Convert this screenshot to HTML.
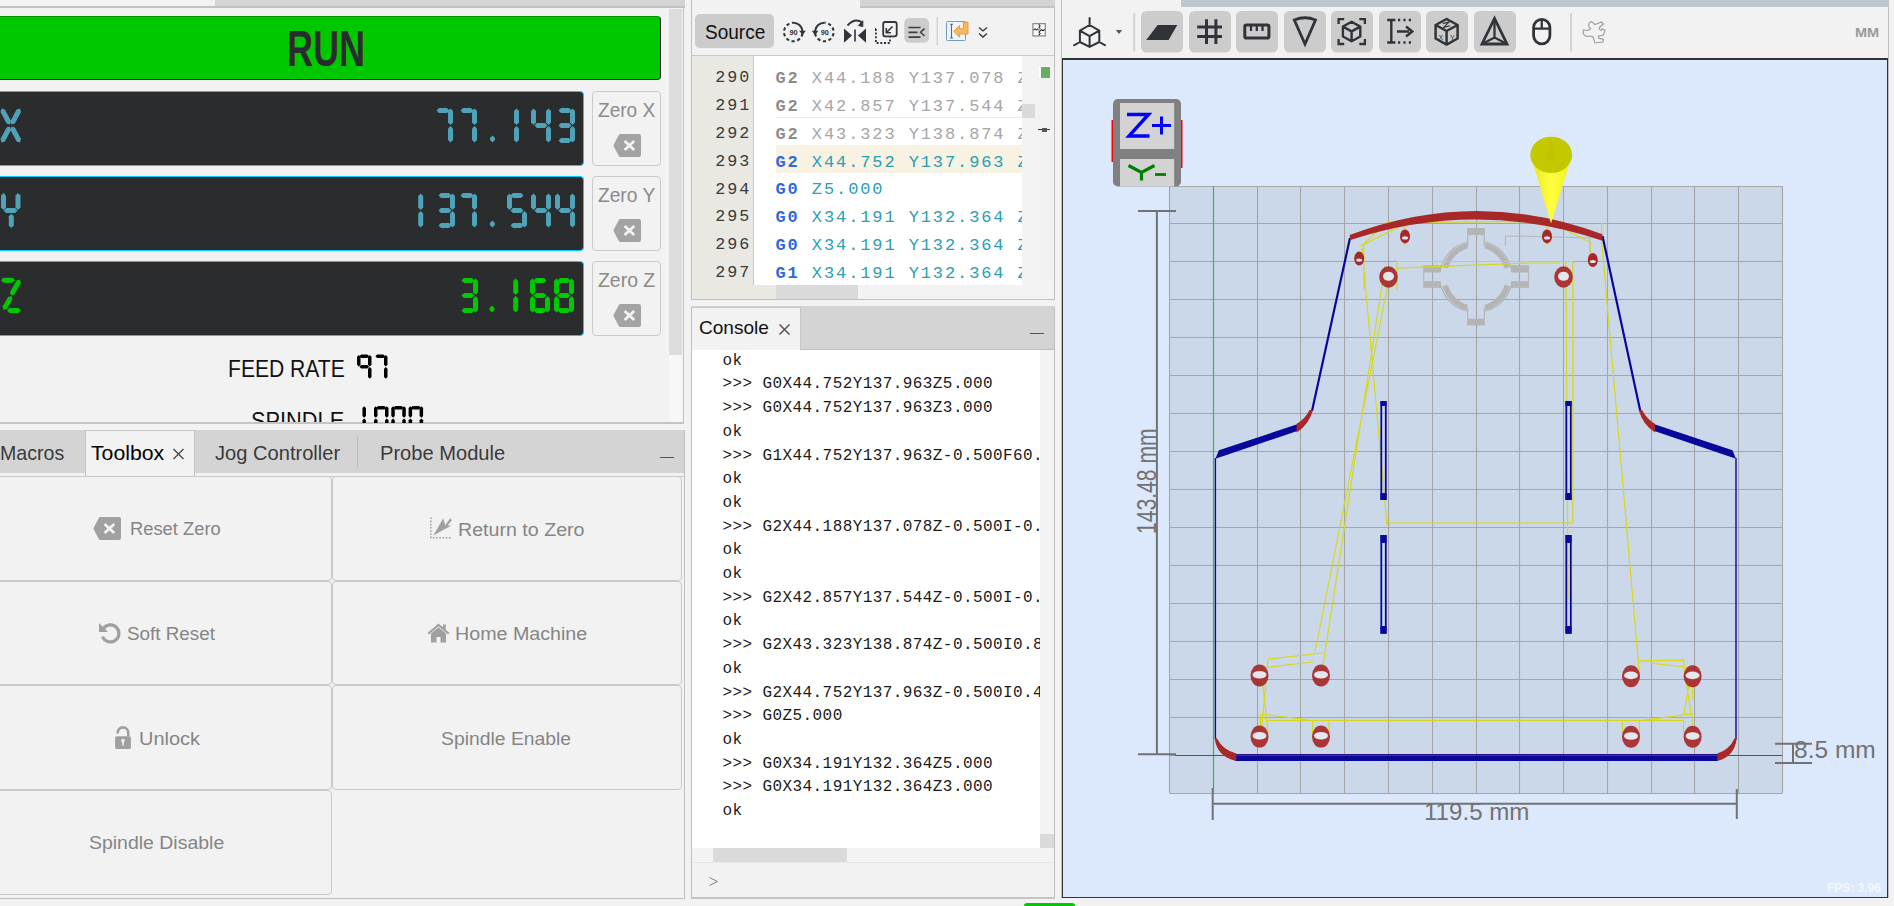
<!DOCTYPE html>
<html><head><meta charset="utf-8">
<style>
*{box-sizing:border-box;margin:0;padding:0}
html,body{width:1894px;height:906px;overflow:hidden;background:#f2f2f2;font-family:"Liberation Sans",sans-serif;position:relative}
.a{position:absolute}
.t{position:absolute;white-space:nowrap;line-height:1}
.dro{position:absolute;left:-6px;width:590px;height:75px;background:#2b2c2e;border:1px solid #00cdf9;border-radius:4px}
.zb{position:absolute;left:592px;width:69px;height:75px;border:1px solid #cbcbcb;border-radius:4px;background:#f2f2f2}
.zb .lbl{position:absolute;left:6px;top:11px;font-size:19px;color:#8a8a8a;white-space:nowrap;line-height:1}
.btn{position:absolute;border:1px solid #c9c9c9;border-radius:4px;background:#f2f2f2}
.bl{position:absolute;white-space:nowrap;font-size:18.6px;color:#878787;line-height:1}
.mono{font-family:"Liberation Mono",monospace}
</style></head><body>

<!-- ============ LEFT TOP PANEL (DRO) ============ -->
<div class="a" style="left:0;top:0;width:215px;height:7px;background:#f2f2f2"></div>
<div class="a" style="left:215px;top:0;width:470px;height:7px;background:#d4d4d4"></div>
<div class="a" style="left:0;top:6px;width:685px;height:2px;background:#c2c2c2"></div>
<div class="a" style="left:683px;top:7px;width:1px;height:417px;background:#c0c0c0"></div>
<div class="a" style="left:0;top:422px;width:684px;height:2px;background:#c4c4c4"></div>
<!-- scrollbar -->
<div class="a" style="left:669px;top:9px;width:13px;height:346px;background:#dcdcdc"></div>
<div class="a" style="left:669px;top:355px;width:13px;height:67px;background:#f7f7f7"></div>

<!-- RUN -->
<div class="a" style="left:-6px;top:16px;width:667px;height:64px;background:#00c800;border:1px solid #222226;border-top-color:#009600;border-radius:4px"></div>
<div class="t" style="left:287.40px;top:25.00px;font-family:'Liberation Sans';font-weight:bold;font-size:49.85px;color:#2a2b2e;transform:scaleX(0.7238);transform-origin:0 0;">RUN</div>

<div class="dro" style="top:91px"></div>
<div class="dro" style="top:176px"></div>
<div class="dro" style="top:261px"></div>

<svg class="a" style="left:0;top:0" width="684" height="423" viewBox="0 0 684 423"><polygon points="436.50,110.50 439.00,108.00 447.00,108.00 449.50,110.50 447.00,113.00 439.00,113.00" fill="#4fa2b7"/><polygon points="450.50,108.50 453.00,111.00 453.00,122.50 450.50,125.00 448.00,122.50 448.00,111.00" fill="#4fa2b7"/><polygon points="450.50,126.00 453.00,128.50 453.00,140.00 450.50,142.50 448.00,140.00 448.00,128.50" fill="#4fa2b7"/><polygon points="460.50,110.50 463.00,108.00 471.00,108.00 473.50,110.50 471.00,113.00 463.00,113.00" fill="#4fa2b7"/><polygon points="474.50,108.50 477.00,111.00 477.00,122.50 474.50,125.00 472.00,122.50 472.00,111.00" fill="#4fa2b7"/><polygon points="474.50,126.00 477.00,128.50 477.00,140.00 474.50,142.50 472.00,140.00 472.00,128.50" fill="#4fa2b7"/><polygon points="533.50,108.50 536.00,111.00 536.00,122.50 533.50,125.00 531.00,122.50 531.00,111.00" fill="#4fa2b7"/><polygon points="534.50,125.50 537.00,123.00 545.00,123.00 547.50,125.50 545.00,128.00 537.00,128.00" fill="#4fa2b7"/><polygon points="548.50,108.50 551.00,111.00 551.00,122.50 548.50,125.00 546.00,122.50 546.00,111.00" fill="#4fa2b7"/><polygon points="548.50,126.00 551.00,128.50 551.00,140.00 548.50,142.50 546.00,140.00 546.00,128.50" fill="#4fa2b7"/><polygon points="558.50,110.50 561.00,108.00 569.00,108.00 571.50,110.50 569.00,113.00 561.00,113.00" fill="#4fa2b7"/><polygon points="572.50,108.50 575.00,111.00 575.00,122.50 572.50,125.00 570.00,122.50 570.00,111.00" fill="#4fa2b7"/><polygon points="558.50,125.50 561.00,123.00 569.00,123.00 571.50,125.50 569.00,128.00 561.00,128.00" fill="#4fa2b7"/><polygon points="572.50,126.00 575.00,128.50 575.00,140.00 572.50,142.50 570.00,140.00 570.00,128.50" fill="#4fa2b7"/><polygon points="558.50,140.50 561.00,138.00 569.00,138.00 571.50,140.50 569.00,143.00 561.00,143.00" fill="#4fa2b7"/><polygon points="516.50,108.50 519.00,111.00 519.00,122.50 516.50,125.00 514.00,122.50 514.00,111.00" fill="#4fa2b7"/><polygon points="516.50,126.00 519.00,128.50 519.00,140.00 516.50,142.50 514.00,140.00 514.00,128.50" fill="#4fa2b7"/><polygon points="492.50,135.50 495.00,138.00 495.00,140.00 492.50,142.50 490.00,140.00 490.00,138.00" fill="#4fa2b7"/><polygon points="438.50,195.50 441.00,193.00 449.00,193.00 451.50,195.50 449.00,198.00 441.00,198.00" fill="#4fa2b7"/><polygon points="452.50,193.50 455.00,196.00 455.00,207.50 452.50,210.00 450.00,207.50 450.00,196.00" fill="#4fa2b7"/><polygon points="438.50,210.50 441.00,208.00 449.00,208.00 451.50,210.50 449.00,213.00 441.00,213.00" fill="#4fa2b7"/><polygon points="452.50,211.00 455.00,213.50 455.00,225.00 452.50,227.50 450.00,225.00 450.00,213.50" fill="#4fa2b7"/><polygon points="438.50,225.50 441.00,223.00 449.00,223.00 451.50,225.50 449.00,228.00 441.00,228.00" fill="#4fa2b7"/><polygon points="460.50,195.50 463.00,193.00 471.00,193.00 473.50,195.50 471.00,198.00 463.00,198.00" fill="#4fa2b7"/><polygon points="474.50,193.50 477.00,196.00 477.00,207.50 474.50,210.00 472.00,207.50 472.00,196.00" fill="#4fa2b7"/><polygon points="474.50,211.00 477.00,213.50 477.00,225.00 474.50,227.50 472.00,225.00 472.00,213.50" fill="#4fa2b7"/><polygon points="510.50,195.50 513.00,193.00 521.00,193.00 523.50,195.50 521.00,198.00 513.00,198.00" fill="#4fa2b7"/><polygon points="509.50,193.50 512.00,196.00 512.00,207.50 509.50,210.00 507.00,207.50 507.00,196.00" fill="#4fa2b7"/><polygon points="510.50,210.50 513.00,208.00 521.00,208.00 523.50,210.50 521.00,213.00 513.00,213.00" fill="#4fa2b7"/><polygon points="524.50,211.00 527.00,213.50 527.00,225.00 524.50,227.50 522.00,225.00 522.00,213.50" fill="#4fa2b7"/><polygon points="510.50,225.50 513.00,223.00 521.00,223.00 523.50,225.50 521.00,228.00 513.00,228.00" fill="#4fa2b7"/><polygon points="533.50,193.50 536.00,196.00 536.00,207.50 533.50,210.00 531.00,207.50 531.00,196.00" fill="#4fa2b7"/><polygon points="534.50,210.50 537.00,208.00 545.00,208.00 547.50,210.50 545.00,213.00 537.00,213.00" fill="#4fa2b7"/><polygon points="548.50,193.50 551.00,196.00 551.00,207.50 548.50,210.00 546.00,207.50 546.00,196.00" fill="#4fa2b7"/><polygon points="548.50,211.00 551.00,213.50 551.00,225.00 548.50,227.50 546.00,225.00 546.00,213.50" fill="#4fa2b7"/><polygon points="557.50,193.50 560.00,196.00 560.00,207.50 557.50,210.00 555.00,207.50 555.00,196.00" fill="#4fa2b7"/><polygon points="558.50,210.50 561.00,208.00 569.00,208.00 571.50,210.50 569.00,213.00 561.00,213.00" fill="#4fa2b7"/><polygon points="572.50,193.50 575.00,196.00 575.00,207.50 572.50,210.00 570.00,207.50 570.00,196.00" fill="#4fa2b7"/><polygon points="572.50,211.00 575.00,213.50 575.00,225.00 572.50,227.50 570.00,225.00 570.00,213.50" fill="#4fa2b7"/><polygon points="420.70,193.50 423.20,196.00 423.20,207.50 420.70,210.00 418.20,207.50 418.20,196.00" fill="#4fa2b7"/><polygon points="420.70,211.00 423.20,213.50 423.20,225.00 420.70,227.50 418.20,225.00 418.20,213.50" fill="#4fa2b7"/><polygon points="492.40,220.50 494.90,223.00 494.90,225.00 492.40,227.50 489.90,225.00 489.90,223.00" fill="#4fa2b7"/><polygon points="461.50,280.50 464.00,278.00 472.00,278.00 474.50,280.50 472.00,283.00 464.00,283.00" fill="#00c800"/><polygon points="475.50,278.50 478.00,281.00 478.00,292.50 475.50,295.00 473.00,292.50 473.00,281.00" fill="#00c800"/><polygon points="461.50,295.50 464.00,293.00 472.00,293.00 474.50,295.50 472.00,298.00 464.00,298.00" fill="#00c800"/><polygon points="475.50,296.00 478.00,298.50 478.00,310.00 475.50,312.50 473.00,310.00 473.00,298.50" fill="#00c800"/><polygon points="461.50,310.50 464.00,308.00 472.00,308.00 474.50,310.50 472.00,313.00 464.00,313.00" fill="#00c800"/><polygon points="533.50,280.50 536.00,278.00 544.00,278.00 546.50,280.50 544.00,283.00 536.00,283.00" fill="#00c800"/><polygon points="532.50,278.50 535.00,281.00 535.00,292.50 532.50,295.00 530.00,292.50 530.00,281.00" fill="#00c800"/><polygon points="533.50,295.50 536.00,293.00 544.00,293.00 546.50,295.50 544.00,298.00 536.00,298.00" fill="#00c800"/><polygon points="532.50,296.00 535.00,298.50 535.00,310.00 532.50,312.50 530.00,310.00 530.00,298.50" fill="#00c800"/><polygon points="533.50,310.50 536.00,308.00 544.00,308.00 546.50,310.50 544.00,313.00 536.00,313.00" fill="#00c800"/><polygon points="547.50,296.00 550.00,298.50 550.00,310.00 547.50,312.50 545.00,310.00 545.00,298.50" fill="#00c800"/><polygon points="557.50,280.50 560.00,278.00 568.00,278.00 570.50,280.50 568.00,283.00 560.00,283.00" fill="#00c800"/><polygon points="571.50,278.50 574.00,281.00 574.00,292.50 571.50,295.00 569.00,292.50 569.00,281.00" fill="#00c800"/><polygon points="571.50,296.00 574.00,298.50 574.00,310.00 571.50,312.50 569.00,310.00 569.00,298.50" fill="#00c800"/><polygon points="557.50,310.50 560.00,308.00 568.00,308.00 570.50,310.50 568.00,313.00 560.00,313.00" fill="#00c800"/><polygon points="556.50,296.00 559.00,298.50 559.00,310.00 556.50,312.50 554.00,310.00 554.00,298.50" fill="#00c800"/><polygon points="556.50,278.50 559.00,281.00 559.00,292.50 556.50,295.00 554.00,292.50 554.00,281.00" fill="#00c800"/><polygon points="557.50,295.50 560.00,293.00 568.00,293.00 570.50,295.50 568.00,298.00 560.00,298.00" fill="#00c800"/><polygon points="515.70,278.50 518.20,281.00 518.20,292.50 515.70,295.00 513.20,292.50 513.20,281.00" fill="#00c800"/><polygon points="515.70,296.00 518.20,298.50 518.20,310.00 515.70,312.50 513.20,310.00 513.20,298.50" fill="#00c800"/><polygon points="492.00,305.50 494.50,308.00 494.50,310.00 492.00,312.50 489.50,310.00 489.50,308.00" fill="#00c800"/><polygon points="1.50,108.50 0.47,111.88 6.62,123.47 10.00,124.50 11.03,121.12 4.88,109.53" fill="#4fa2b7"/><polygon points="20.00,108.50 16.62,109.53 10.47,121.12 11.50,124.50 14.88,123.47 21.03,111.88" fill="#4fa2b7"/><polygon points="10.00,126.50 6.62,127.53 0.47,139.12 1.50,142.50 4.88,141.47 11.03,129.88" fill="#4fa2b7"/><polygon points="11.50,126.50 10.47,129.88 16.62,141.47 20.00,142.50 21.03,139.12 14.88,127.53" fill="#4fa2b7"/><polygon points="3.50,193.00 6.00,195.50 6.00,207.50 3.50,210.00 1.00,207.50 1.00,195.50" fill="#4fa2b7"/><polygon points="18.00,193.00 20.50,195.50 20.50,207.50 18.00,210.00 15.50,207.50 15.50,195.50" fill="#4fa2b7"/><polygon points="3.70,210.50 6.20,208.00 15.10,208.00 17.60,210.50 15.10,213.00 6.20,213.00" fill="#4fa2b7"/><polygon points="11.30,213.70 13.80,216.20 13.80,225.50 11.30,228.00 8.80,225.50 8.80,216.20" fill="#4fa2b7"/><polygon points="1.00,280.30 3.50,277.80 12.50,277.80 15.00,280.30 12.50,282.80 3.50,282.80" fill="#00c800"/><polygon points="20.00,279.50 16.60,280.45 10.05,292.10 11.00,295.50 14.40,294.55 20.95,282.90" fill="#00c800"/><polygon points="11.50,296.00 8.09,296.93 2.57,306.59 3.50,310.00 6.91,309.07 12.43,299.41" fill="#00c800"/><polygon points="7.00,310.40 9.50,307.90 18.50,307.90 21.00,310.40 18.50,312.90 9.50,312.90" fill="#00c800"/><polygon points="359.35,356.35 361.10,354.60 367.40,354.60 369.15,356.35 367.40,358.10 361.10,358.10" fill="#000"/><polygon points="369.75,354.95 371.50,356.70 371.50,364.75 369.75,366.50 368.00,364.75 368.00,356.70" fill="#000"/><polygon points="369.75,367.10 371.50,368.85 371.50,376.90 369.75,378.65 368.00,376.90 368.00,368.85" fill="#000"/><polygon points="358.75,354.95 360.50,356.70 360.50,364.75 358.75,366.50 357.00,364.75 357.00,356.70" fill="#000"/><polygon points="359.35,366.80 361.10,365.05 367.40,365.05 369.15,366.80 367.40,368.55 361.10,368.55" fill="#000"/><polygon points="375.35,356.35 377.10,354.60 383.40,354.60 385.15,356.35 383.40,358.10 377.10,358.10" fill="#000"/><polygon points="385.75,354.95 387.50,356.70 387.50,364.75 385.75,366.50 384.00,364.75 384.00,356.70" fill="#000"/><polygon points="385.75,367.10 387.50,368.85 387.50,376.90 385.75,378.65 384.00,376.90 384.00,368.85" fill="#000"/><polygon points="364.20,406.25 365.95,408.00 365.95,416.05 364.20,417.80 362.45,416.05 362.45,408.00" fill="#000"/><polygon points="364.20,418.40 365.95,420.15 365.95,428.20 364.20,429.95 362.45,428.20 362.45,420.15" fill="#000"/><polygon points="376.35,407.65 378.10,405.90 384.40,405.90 386.15,407.65 384.40,409.40 378.10,409.40" fill="#000"/><polygon points="386.75,406.25 388.50,408.00 388.50,416.05 386.75,417.80 385.00,416.05 385.00,408.00" fill="#000"/><polygon points="386.75,418.40 388.50,420.15 388.50,428.20 386.75,429.95 385.00,428.20 385.00,420.15" fill="#000"/><polygon points="376.35,428.55 378.10,426.80 384.40,426.80 386.15,428.55 384.40,430.30 378.10,430.30" fill="#000"/><polygon points="375.75,418.40 377.50,420.15 377.50,428.20 375.75,429.95 374.00,428.20 374.00,420.15" fill="#000"/><polygon points="375.75,406.25 377.50,408.00 377.50,416.05 375.75,417.80 374.00,416.05 374.00,408.00" fill="#000"/><polygon points="393.65,407.65 395.40,405.90 401.70,405.90 403.45,407.65 401.70,409.40 395.40,409.40" fill="#000"/><polygon points="404.05,406.25 405.80,408.00 405.80,416.05 404.05,417.80 402.30,416.05 402.30,408.00" fill="#000"/><polygon points="404.05,418.40 405.80,420.15 405.80,428.20 404.05,429.95 402.30,428.20 402.30,420.15" fill="#000"/><polygon points="393.65,428.55 395.40,426.80 401.70,426.80 403.45,428.55 401.70,430.30 395.40,430.30" fill="#000"/><polygon points="393.05,418.40 394.80,420.15 394.80,428.20 393.05,429.95 391.30,428.20 391.30,420.15" fill="#000"/><polygon points="393.05,406.25 394.80,408.00 394.80,416.05 393.05,417.80 391.30,416.05 391.30,408.00" fill="#000"/><polygon points="410.95,407.65 412.70,405.90 419.00,405.90 420.75,407.65 419.00,409.40 412.70,409.40" fill="#000"/><polygon points="421.35,406.25 423.10,408.00 423.10,416.05 421.35,417.80 419.60,416.05 419.60,408.00" fill="#000"/><polygon points="421.35,418.40 423.10,420.15 423.10,428.20 421.35,429.95 419.60,428.20 419.60,420.15" fill="#000"/><polygon points="410.95,428.55 412.70,426.80 419.00,426.80 420.75,428.55 419.00,430.30 412.70,430.30" fill="#000"/><polygon points="410.35,418.40 412.10,420.15 412.10,428.20 410.35,429.95 408.60,428.20 408.60,420.15" fill="#000"/><polygon points="410.35,406.25 412.10,408.00 412.10,416.05 410.35,417.80 408.60,416.05 408.60,408.00" fill="#000"/></svg>
<div class="zb" style="top:91px"></div>
<div class="zb" style="top:176px"></div>
<div class="zb" style="top:261px"></div>

<!-- ============ LEFT BOTTOM PANEL (Toolbox) ============ -->
<div class="a" style="left:0;top:430px;width:684px;height:43px;background:#d4d4d4"></div>
<div class="a" style="left:85px;top:430px;width:110px;height:46px;background:#f2f2f2;border:1px solid #c6c6c6;border-bottom:none"></div>
<div class="a" style="left:0;top:476px;width:684px;height:1px;background:#c8c8c8"></div>
<div class="a" style="left:684px;top:430px;width:1px;height:469px;background:#c0c0c0"></div>
<div class="a" style="left:0;top:898px;width:685px;height:1px;background:#c0c0c0"></div>

<div class="t" style="left:598.40px;top:100.64px;font-family:'Liberation Sans';font-weight:normal;font-size:19.33px;color:#8a8a8a;transform:scaleX(0.9860);transform-origin:0 0;">Zero X</div>
<svg class="a" style="left:613.0px;top:134.0px" width="28" height="23" viewBox="0 0 28 23"><path d="M0.3,11.5 L5.8,1.0 Q6.4,0 7.6,0 H25.8 Q28,0 28,2.2 V20.8 Q28,23 25.8,23 H7.6 Q6.4,23 5.8,22 Z" fill="#a3a3a3"/><path d="M11.6,6.9 L21.2,16.1 M21.2,6.9 L11.6,16.1" stroke="#f2f2f2" stroke-width="2.8"/></svg>
<div class="t" style="left:598.40px;top:185.64px;font-family:'Liberation Sans';font-weight:normal;font-size:19.33px;color:#8a8a8a;transform:scaleX(0.9919);transform-origin:0 0;">Zero Y</div>
<svg class="a" style="left:613.0px;top:219.0px" width="28" height="23" viewBox="0 0 28 23"><path d="M0.3,11.5 L5.8,1.0 Q6.4,0 7.6,0 H25.8 Q28,0 28,2.2 V20.8 Q28,23 25.8,23 H7.6 Q6.4,23 5.8,22 Z" fill="#a3a3a3"/><path d="M11.6,6.9 L21.2,16.1 M21.2,6.9 L11.6,16.1" stroke="#f2f2f2" stroke-width="2.8"/></svg>
<div class="t" style="left:598.40px;top:270.64px;font-family:'Liberation Sans';font-weight:normal;font-size:19.33px;color:#8a8a8a;transform:scaleX(1.0047);transform-origin:0 0;">Zero Z</div>
<svg class="a" style="left:613.0px;top:304.0px" width="28" height="23" viewBox="0 0 28 23"><path d="M0.3,11.5 L5.8,1.0 Q6.4,0 7.6,0 H25.8 Q28,0 28,2.2 V20.8 Q28,23 25.8,23 H7.6 Q6.4,23 5.8,22 Z" fill="#a3a3a3"/><path d="M11.6,6.9 L21.2,16.1 M21.2,6.9 L11.6,16.1" stroke="#f2f2f2" stroke-width="2.8"/></svg>
<div class="t" style="left:227.80px;top:357.08px;font-family:'Liberation Sans';font-weight:normal;font-size:24.71px;color:#111;transform:scaleX(0.8536);transform-origin:0 0;">FEED RATE</div>
<div class="a" style="left:0;top:385px;width:668px;height:37px;overflow:hidden"><div class="t" style="left:251.20px;top:24.08px;font-family:'Liberation Sans';font-weight:normal;font-size:24.71px;color:#111;transform:scaleX(0.8815);transform-origin:0 0;">SPINDLE</div></div>
<div class="t" style="left:0.40px;top:443.51px;font-family:'Liberation Sans';font-weight:normal;font-size:19.48px;color:#3a3a3a;transform:scaleX(1.0056);transform-origin:0 0;">Macros</div>
<div class="t" style="left:91.40px;top:443.51px;font-family:'Liberation Sans';font-weight:normal;font-size:19.48px;color:#000;transform:scaleX(1.0903);transform-origin:0 0;">Toolbox</div>
<svg class="a" style="left:172px;top:448px" width="13" height="12"><path d="M1.5,1 L11.5,11 M11.5,1 L1.5,11" stroke="#505050" stroke-width="1.5"/></svg>
<div class="t" style="left:215.00px;top:443.51px;font-family:'Liberation Sans';font-weight:normal;font-size:19.48px;color:#3a3a3a;transform:scaleX(1.0326);transform-origin:0 0;">Jog Controller</div>
<div class="a" style="left:357px;top:436px;width:1px;height:31px;background:#bcbcbc"></div>
<div class="t" style="left:379.90px;top:443.51px;font-family:'Liberation Sans';font-weight:normal;font-size:19.48px;color:#3a3a3a;transform:scaleX(1.0325);transform-origin:0 0;">Probe Module</div>
<div class="a" style="left:660px;top:456.5px;width:14px;height:1.2px;background:#555"></div>
<div class="btn" style="left:-6px;top:476.0px;width:338px;height:104.7px"></div>
<div class="btn" style="left:332px;top:476.0px;width:350px;height:104.7px"></div>
<div class="btn" style="left:-6px;top:580.7px;width:338px;height:104.7px"></div>
<div class="btn" style="left:332px;top:580.7px;width:350px;height:104.7px"></div>
<div class="btn" style="left:-6px;top:685.3px;width:338px;height:104.7px"></div>
<div class="btn" style="left:332px;top:685.3px;width:350px;height:104.7px"></div>
<div class="btn" style="left:-6px;top:790.0px;width:338px;height:104.7px"></div>
<svg class="a" style="left:93.0px;top:517.0px" width="28" height="23" viewBox="0 0 28 23"><path d="M0.3,11.5 L5.8,1.0 Q6.4,0 7.6,0 H25.8 Q28,0 28,2.2 V20.8 Q28,23 25.8,23 H7.6 Q6.4,23 5.8,22 Z" fill="#a0a0a0"/><path d="M11.6,6.9 L21.2,16.1 M21.2,6.9 L11.6,16.1" stroke="#f2f2f2" stroke-width="2.8"/></svg>
<div class="t" style="left:130.30px;top:520.13px;font-family:'Liberation Sans';font-weight:normal;font-size:18.75px;color:#858585;transform:scaleX(0.9780);transform-origin:0 0;">Reset Zero</div>
<svg class="a" style="left:429px;top:516px" width="24" height="23" viewBox="0 0 24 23"><path d="M1.9,1.4 V21.8 H22.8" stroke="#a0a0a0" stroke-width="1.5" stroke-dasharray="1.6,1.6" fill="none"/><path d="M4.3,19.4 L14.3,2.3 L16.2,9.2 L21.3,2.3 L22.8,4.2 L18.6,9.4 L22.4,9.4 Z" fill="#a0a0a0"/></svg>
<div class="t" style="left:457.70px;top:520.63px;font-family:'Liberation Sans';font-weight:normal;font-size:18.75px;color:#858585;transform:scaleX(1.0465);transform-origin:0 0;">Return to Zero</div>
<svg class="a" style="left:98px;top:621px" width="24" height="24" viewBox="0 0 24 24"><path d="M5.5,7.5 A8.5,8.5 0 1 1 4.5,15.5" stroke="#a0a0a0" stroke-width="3.2" fill="none"/><path d="M1,2 L1,11 L10,11 Z" fill="#a0a0a0"/></svg>
<div class="t" style="left:126.90px;top:624.63px;font-family:'Liberation Sans';font-weight:normal;font-size:18.75px;color:#858585;transform:scaleX(1.0041);transform-origin:0 0;">Soft Reset</div>
<svg class="a" style="left:427px;top:623px" width="23" height="20" viewBox="0 0 23 20"><path d="M11.5,0.5 L0.5,10 L2,11.5 L11.5,3.3 L21,11.5 L22.5,10 Z" fill="#a0a0a0"/><path d="M4,10.5 L11.5,4.3 L19,10.5 V19.5 H13.5 V14 H9.5 V19.5 H4 Z" fill="#a0a0a0"/><rect x="16" y="1.5" width="2.8" height="5" fill="#a0a0a0"/></svg>
<div class="t" style="left:454.80px;top:624.63px;font-family:'Liberation Sans';font-weight:normal;font-size:18.75px;color:#858585;transform:scaleX(1.0484);transform-origin:0 0;">Home Machine</div>
<svg class="a" style="left:114px;top:725px" width="18" height="25" viewBox="0 0 18 25"><path d="M3.6,8.6 V7.75 A5.35,5.35 0 0 1 14.3,7.75 V11.5" stroke="#a0a0a0" stroke-width="2.6" fill="none"/><rect x="1.1" y="11.2" width="15.8" height="12.7" rx="1.6" fill="#a0a0a0"/><circle cx="9" cy="15.6" r="1.8" fill="#f2f2f2"/><rect x="8.2" y="15.8" width="1.6" height="4.6" fill="#f2f2f2"/></svg>
<div class="t" style="left:138.90px;top:729.93px;font-family:'Liberation Sans';font-weight:normal;font-size:18.75px;color:#858585;transform:scaleX(1.0635);transform-origin:0 0;">Unlock</div>
<div class="t" style="left:441.30px;top:729.93px;font-family:'Liberation Sans';font-weight:normal;font-size:18.75px;color:#858585;transform:scaleX(1.0313);transform-origin:0 0;">Spindle Enable</div>
<div class="t" style="left:88.70px;top:834.43px;font-family:'Liberation Sans';font-weight:normal;font-size:18.75px;color:#858585;transform:scaleX(1.0377);transform-origin:0 0;">Spindle Disable</div>
<!-- ============ SOURCE PANEL ============ -->
<div class="a" style="left:692px;top:0;width:168px;height:7px;background:#f2f2f2"></div>
<div class="a" style="left:860px;top:0;width:195px;height:7px;background:#d4d4d4"></div>
<div class="a" style="left:860px;top:6px;width:195px;height:2px;background:#c4c4c4"></div>
<div class="a" style="left:691px;top:0;width:1px;height:300px;background:#c0c0c0"></div>
<div class="a" style="left:1054px;top:7px;width:1px;height:293px;background:#c0c0c0"></div>
<div class="a" style="left:691px;top:55px;width:363px;height:1px;background:#cacaca"></div>
<div class="a" style="left:692px;top:56px;width:61px;height:243px;background:#e9e8e3"></div>
<div class="a" style="left:753px;top:285px;width:23px;height:14px;background:#e9e8e3"></div>
<div class="a" style="left:753px;top:56px;width:1px;height:229px;background:#c8c8c8"></div>
<div class="a" style="left:754px;top:56px;width:268px;height:229px;background:#fff"></div>
<div class="a" style="left:776px;top:145px;width:246px;height:28px;background:#f8f2e2"></div>
<div class="a" style="left:1022px;top:56px;width:13px;height:229px;background:#f3f3f3"></div>
<div class="a" style="left:1022px;top:104px;width:13px;height:14px;background:#dadada"></div>
<div class="a" style="left:776px;top:285px;width:278px;height:14px;background:#f3f3f3"></div>
<div class="a" style="left:776px;top:285px;width:82px;height:14px;background:#dadada"></div>
<div class="a" style="left:691px;top:299px;width:364px;height:1px;background:#c0c0c0"></div>

<!-- ============ CONSOLE PANEL ============ -->
<div class="a" style="left:691px;top:306px;width:364px;height:44px;background:#d4d4d4;border-bottom:1px solid #c0c0c0"></div>
<div class="a" style="left:691px;top:307px;width:110px;height:43px;background:#f2f2f2;border:1px solid #c6c6c6;border-bottom:none"></div>
<div class="a" style="left:691px;top:307px;width:1px;height:591px;background:#c0c0c0"></div>
<div class="a" style="left:1054px;top:307px;width:1px;height:591px;background:#c0c0c0"></div>
<div class="a" style="left:692px;top:350px;width:348px;height:498px;background:#fff"></div>
<div class="a" style="left:1040px;top:350px;width:14px;height:498px;background:#f3f3f3"></div>
<div class="a" style="left:1040px;top:834px;width:14px;height:14px;background:#dadada"></div>
<div class="a" style="left:692px;top:848px;width:362px;height:14px;background:#f3f3f3"></div>
<div class="a" style="left:713px;top:848px;width:134px;height:14px;background:#dadada"></div>
<div class="a" style="left:692px;top:862px;width:362px;height:1px;background:#e6e6e6"></div>
<div class="a" style="left:691px;top:897px;width:364px;height:2px;background:#c4c4c4"></div>

<div class="a" style="left:695px;top:14px;width:79px;height:34px;background:#cccccc;border-radius:5px"></div>
<div class="t" style="left:704.80px;top:22.54px;font-family:'Liberation Sans';font-weight:normal;font-size:19.33px;color:#111;transform:scaleX(0.9830);transform-origin:0 0;">Source</div>
<svg class="a" style="left:770px;top:10px" width="290" height="40" viewBox="770 10 290 40"><path d="M802.50,33.50 A9.3,9.3 0 1 1 793.20,22.70" fill="none" stroke="#30343a" stroke-width="2.1" stroke-dasharray="3.2,2.6"/><path d="M793.20,22.70 A9.3,9.3 0 0 1 802.50,31.00" fill="none" stroke="#30343a" stroke-width="2.1"/><path d="M799.20,30.80 L805.80,30.80 L802.50,35.30 Z" fill="#30343a"/><text x="793.50" y="34.60" font-family="Liberation Sans" font-weight="bold" font-size="7.3" text-anchor="middle" fill="#30343a">90</text><path d="M815.10,33.50 A9.3,9.3 0 1 0 824.40,22.70" fill="none" stroke="#30343a" stroke-width="2.1" stroke-dasharray="3.2,2.6"/><path d="M824.40,22.70 A9.3,9.3 0 0 0 815.10,31.00" fill="none" stroke="#30343a" stroke-width="2.1"/><path d="M811.80,30.80 L818.40,30.80 L815.10,35.30 Z" fill="#30343a"/><text x="824.70" y="34.60" font-family="Liberation Sans" font-weight="bold" font-size="7.3" text-anchor="middle" fill="#30343a">90</text><path d="M844,28.5 L852,35.6 L844,42.8 Z M866,28.5 L858,35.6 L866,42.8 Z" fill="#30343a"/><rect x="854.2" y="29.5" width="1.6" height="12" fill="#30343a"/><path d="M847.5,25.5 Q855,17.5 862,22.5" fill="none" stroke="#30343a" stroke-width="1.9"/><path d="M858.5,25.5 L862.8,20.8 L862.8,26.6 Z" fill="#30343a" stroke="#30343a" stroke-width="1"/><rect x="883.2" y="22" width="13.5" height="14.3" rx="2" fill="none" stroke="#30343a" stroke-width="1.8"/><path d="M876,29 H875.9 V43 H890 V37.5" fill="none" stroke="#30343a" stroke-width="1.8" stroke-dasharray="2,1.7"/><path d="M892.5,26.5 L886.5,32.5 M886.3,28 V32.7 H891" fill="none" stroke="#30343a" stroke-width="1.6"/><rect x="904.3" y="18" width="24.7" height="24.8" rx="5" fill="#cccccc"/><path d="M908.5,27.5 H920.5 M908.5,32.3 H917.5 M908.5,37.2 H920.5" stroke="#3a3d42" stroke-width="1.7"/><path d="M924.5,28.6 L920.5,32.3 L924.5,36" fill="none" stroke="#3a3d42" stroke-width="1.5"/><rect x="936.6" y="17" width="1.3" height="28" fill="#cfcfcf"/><rect x="946.5" y="21.5" width="19" height="19" rx="1" fill="#eef4fa" stroke="#6f9cc2" stroke-width="1"/><path d="M951.5,24.2 V38 M950,24.2 H953 M950,38 H953" stroke="#666" stroke-width="1.1"/><path d="M953.8,31.2 L959.6,25.6 V28.7 H963.3 V22.2 L968,22.2 V34 H959.6 V37.3 Z" fill="#f6b85c" stroke="#d69a3a" stroke-width="0.9"/><path d="M979,27.5 L983,31 L987,27.5 M979,33.6 L983,37.1 L987,33.6" fill="none" stroke="#333" stroke-width="1.3"/><rect x="1032.3" y="23" width="13.6" height="13.6" fill="#8c8c8c"/><rect x="1033.6" y="24.3" width="5" height="5" fill="#fff"/><rect x="1039.6" y="24.3" width="5" height="5" fill="#fff"/><rect x="1033.6" y="30.3" width="5" height="5" fill="#fff"/><rect x="1039.6" y="30.3" width="5" height="5" fill="#fff"/><path d="M1039.1,24.5 L1040.3,26 L1039.1,27.3 L1040.3,28.6 M1039.1,35 L1040.3,33.5 L1039.1,32.2 L1040.3,30.9 M1033.6,29.8 L1035.2,28.8 L1036.6,29.8 L1038,28.8 M1044.6,29.8 L1043,30.8 L1041.6,29.8 L1040.2,30.8" fill="none" stroke="#111" stroke-width="1"/></svg>
<div class="a" style="left:1039px;top:66px;width:11px;height:12px;background:#63b063;border-left:2px solid #fff;border-top:1px solid #fff"></div>
<div class="a" style="left:1038px;top:129px;width:12px;height:1.4px;background:#333"></div>
<div class="a" style="left:1042px;top:127.5px;width:5px;height:4px;background:#555"></div>
<div class="t" style="left:715.30px;top:70.21px;font-family:'Liberation Mono';font-weight:normal;font-size:16.69px;color:#3a3a3a;letter-spacing:1.9px;">290</div>
<div class="t" style="left:715.30px;top:98.06px;font-family:'Liberation Mono';font-weight:normal;font-size:16.69px;color:#3a3a3a;letter-spacing:1.9px;">291</div>
<div class="t" style="left:715.30px;top:125.91px;font-family:'Liberation Mono';font-weight:normal;font-size:16.69px;color:#3a3a3a;letter-spacing:1.9px;">292</div>
<div class="t" style="left:715.30px;top:153.76px;font-family:'Liberation Mono';font-weight:normal;font-size:16.69px;color:#3a3a3a;letter-spacing:1.9px;">293</div>
<div class="t" style="left:715.30px;top:181.61px;font-family:'Liberation Mono';font-weight:normal;font-size:16.69px;color:#3a3a3a;letter-spacing:1.9px;">294</div>
<div class="t" style="left:715.30px;top:209.46px;font-family:'Liberation Mono';font-weight:normal;font-size:16.69px;color:#3a3a3a;letter-spacing:1.9px;">295</div>
<div class="t" style="left:715.30px;top:237.31px;font-family:'Liberation Mono';font-weight:normal;font-size:16.69px;color:#3a3a3a;letter-spacing:1.9px;">296</div>
<div class="t" style="left:715.30px;top:265.16px;font-family:'Liberation Mono';font-weight:normal;font-size:16.69px;color:#3a3a3a;letter-spacing:1.9px;">297</div>
<div class="a" style="left:754px;top:56px;width:268px;height:229px;overflow:hidden"><div class="t" style="left:21.5px;top:13.97px;font-family:'Liberation Mono';font-size:17px;letter-spacing:1.9px"><b style="color:#8c8c8c">G2</b><span style="color:#a6a6a6"> X44.188 Y137.078 Z</span></div><div class="t" style="left:21.5px;top:41.82px;font-family:'Liberation Mono';font-size:17px;letter-spacing:1.9px"><b style="color:#8c8c8c">G2</b><span style="color:#a6a6a6"> X42.857 Y137.544 Z</span></div><div class="t" style="left:21.5px;top:69.67px;font-family:'Liberation Mono';font-size:17px;letter-spacing:1.9px"><b style="color:#8c8c8c">G2</b><span style="color:#a6a6a6"> X43.323 Y138.874 Z</span></div><div class="t" style="left:21.5px;top:97.52px;font-family:'Liberation Mono';font-size:17px;letter-spacing:1.9px"><b style="color:#2f6bd8">G2</b><span style="color:#2aa0b5"> X44.752 Y137.963 Z</span></div><div class="t" style="left:21.5px;top:125.37px;font-family:'Liberation Mono';font-size:17px;letter-spacing:1.9px"><b style="color:#2f6bd8">G0</b><span style="color:#2aa0b5"> Z5.000</span></div><div class="t" style="left:21.5px;top:153.22px;font-family:'Liberation Mono';font-size:17px;letter-spacing:1.9px"><b style="color:#2f6bd8">G0</b><span style="color:#2aa0b5"> X34.191 Y132.364 Z</span></div><div class="t" style="left:21.5px;top:181.07px;font-family:'Liberation Mono';font-size:17px;letter-spacing:1.9px"><b style="color:#2f6bd8">G0</b><span style="color:#2aa0b5"> X34.191 Y132.364 Z</span></div><div class="t" style="left:21.5px;top:208.92px;font-family:'Liberation Mono';font-size:17px;letter-spacing:1.9px"><b style="color:#2f6bd8">G1</b><span style="color:#2aa0b5"> X34.191 Y132.364 Z</span></div></div>
<div class="a" style="left:776px;top:117px;width:246px;height:1px;background:#f3ebd6"></div>
<div class="t" style="left:699.00px;top:318.55px;font-family:'Liberation Sans';font-weight:normal;font-size:18.60px;color:#111;transform:scaleX(1.0255);transform-origin:0 0;">Console</div>
<svg class="a" style="left:778px;top:323px" width="13" height="13"><path d="M1.5,1.5 L11.5,11.5 M11.5,1.5 L1.5,11.5" stroke="#555" stroke-width="1.5"/></svg>
<div class="a" style="left:1030px;top:333px;width:14px;height:1.2px;background:#555"></div>
<div class="a" style="left:692px;top:350px;width:348px;height:498px;overflow:hidden"><div class="t" style="left:30.4px;top:2.74px;font-family:'Liberation Mono';font-size:16px;letter-spacing:0.42px;color:#1a1a1a">ok</div><div class="t" style="left:30.4px;top:26.44px;font-family:'Liberation Mono';font-size:16px;letter-spacing:0.42px;color:#1a1a1a">&gt;&gt;&gt; G0X44.752Y137.963Z5.000</div><div class="t" style="left:30.4px;top:50.14px;font-family:'Liberation Mono';font-size:16px;letter-spacing:0.42px;color:#1a1a1a">&gt;&gt;&gt; G0X44.752Y137.963Z3.000</div><div class="t" style="left:30.4px;top:73.84px;font-family:'Liberation Mono';font-size:16px;letter-spacing:0.42px;color:#1a1a1a">ok</div><div class="t" style="left:30.4px;top:97.54px;font-family:'Liberation Mono';font-size:16px;letter-spacing:0.42px;color:#1a1a1a">&gt;&gt;&gt; G1X44.752Y137.963Z-0.500F60.0</div><div class="t" style="left:30.4px;top:121.24px;font-family:'Liberation Mono';font-size:16px;letter-spacing:0.42px;color:#1a1a1a">ok</div><div class="t" style="left:30.4px;top:144.94px;font-family:'Liberation Mono';font-size:16px;letter-spacing:0.42px;color:#1a1a1a">ok</div><div class="t" style="left:30.4px;top:168.64px;font-family:'Liberation Mono';font-size:16px;letter-spacing:0.42px;color:#1a1a1a">&gt;&gt;&gt; G2X44.188Y137.078Z-0.500I-0.5</div><div class="t" style="left:30.4px;top:192.34px;font-family:'Liberation Mono';font-size:16px;letter-spacing:0.42px;color:#1a1a1a">ok</div><div class="t" style="left:30.4px;top:216.04px;font-family:'Liberation Mono';font-size:16px;letter-spacing:0.42px;color:#1a1a1a">ok</div><div class="t" style="left:30.4px;top:239.74px;font-family:'Liberation Mono';font-size:16px;letter-spacing:0.42px;color:#1a1a1a">&gt;&gt;&gt; G2X42.857Y137.544Z-0.500I-0.6</div><div class="t" style="left:30.4px;top:263.44px;font-family:'Liberation Mono';font-size:16px;letter-spacing:0.42px;color:#1a1a1a">ok</div><div class="t" style="left:30.4px;top:287.14px;font-family:'Liberation Mono';font-size:16px;letter-spacing:0.42px;color:#1a1a1a">&gt;&gt;&gt; G2X43.323Y138.874Z-0.500I0.8</div><div class="t" style="left:30.4px;top:310.84px;font-family:'Liberation Mono';font-size:16px;letter-spacing:0.42px;color:#1a1a1a">ok</div><div class="t" style="left:30.4px;top:334.54px;font-family:'Liberation Mono';font-size:16px;letter-spacing:0.42px;color:#1a1a1a">&gt;&gt;&gt; G2X44.752Y137.963Z-0.500I0.4</div><div class="t" style="left:30.4px;top:358.24px;font-family:'Liberation Mono';font-size:16px;letter-spacing:0.42px;color:#1a1a1a">&gt;&gt;&gt; G0Z5.000</div><div class="t" style="left:30.4px;top:381.94px;font-family:'Liberation Mono';font-size:16px;letter-spacing:0.42px;color:#1a1a1a">ok</div><div class="t" style="left:30.4px;top:405.64px;font-family:'Liberation Mono';font-size:16px;letter-spacing:0.42px;color:#1a1a1a">&gt;&gt;&gt; G0X34.191Y132.364Z5.000</div><div class="t" style="left:30.4px;top:429.34px;font-family:'Liberation Mono';font-size:16px;letter-spacing:0.42px;color:#1a1a1a">&gt;&gt;&gt; G0X34.191Y132.364Z3.000</div><div class="t" style="left:30.4px;top:453.04px;font-family:'Liberation Mono';font-size:16px;letter-spacing:0.42px;color:#1a1a1a">ok</div></div>
<svg class="a" style="left:708px;top:876px" width="12" height="12"><path d="M1.5,1.5 L9.5,5.5 L1.5,9.5" fill="none" stroke="#808080" stroke-width="1"/></svg>
<!-- ============ VISUALIZER ============ -->
<div class="a" style="left:1181px;top:0;width:708px;height:7px;background:#bdc7d1"></div>
<div class="a" style="left:1181px;top:6px;width:708px;height:1px;background:#c4c8cc"></div>
<div class="a" style="left:1061px;top:0;width:1px;height:898px;background:#c0c0c0"></div>
<div class="a" style="left:1888px;top:7px;width:1px;height:891px;background:#c0c0c0"></div>
<div class="a" style="left:1062px;top:58px;width:826px;height:840px;background:#dce9fc;border:1px solid #333;border-top-width:2px"></div>

<svg class="a" style="left:1062px;top:8px" width="826" height="50" viewBox="1062 8 826 50"><g fill="none" stroke="#30343a" stroke-width="2" stroke-linejoin="round"><path d="M1089.6,17.3 V25 M1089.6,25 L1079.9,30.6 L1089.6,36.2 L1099.3,30.6 Z M1079.9,30.6 V42 L1089.6,46.9 L1099.3,42 V30.6 M1089.6,36.2 V46.9 M1079.9,42 L1073.4,45.7 M1099.3,42 L1105.7,45.7"/></g><path d="M1115.8,30 H1122.2 L1119,34 Z" fill="#555"/><rect x="1133.2" y="13.2" width="2" height="38.3" fill="#d3d3d3"/><rect x="1141" y="11" width="42" height="41.6" rx="5.5" fill="#cccccc"/><rect x="1189" y="11" width="42" height="41.6" rx="5.5" fill="#cccccc"/><rect x="1236" y="11" width="42" height="41.6" rx="5.5" fill="#cccccc"/><rect x="1284" y="11" width="42" height="41.6" rx="5.5" fill="#cccccc"/><rect x="1331" y="11" width="42" height="41.6" rx="5.5" fill="#cccccc"/><rect x="1379" y="11" width="42" height="41.6" rx="5.5" fill="#cccccc"/><rect x="1426" y="11" width="42" height="41.6" rx="5.5" fill="#cccccc"/><rect x="1474" y="11" width="42" height="41.6" rx="5.5" fill="#cccccc"/><path d="M1146.2,39.9 L1157.6,25 H1177.3 L1168.6,39.9 Z" fill="#30343a"/><path d="M1206.5,19.2 V44.1 M1215.9,19.2 V44.1 M1197.2,27 H1222 M1197.2,36.6 H1222" stroke="#30343a" stroke-width="3"/><rect x="1244.8" y="25" width="24.1" height="13.1" rx="1.6" fill="none" stroke="#30343a" stroke-width="3"/><path d="M1251,25 V31 M1256.8,25 V31 M1262.5,25 V31" stroke="#30343a" stroke-width="2.3"/><path d="M1294.3,20 Q1305,15.5 1315.5,20 L1305,44 Z" fill="none" stroke="#30343a" stroke-width="2.8" stroke-linejoin="miter"/><path d="M1338.6,24 V19.2 H1344.2 M1359.3,19.2 H1364.9 V24 M1338.6,39 V44 H1344.2 M1359.3,44 H1364.9 V39" fill="none" stroke="#30343a" stroke-width="2.3"/><path d="M1351.6,21.8 L1342.9,26.6 V36.5 L1351.6,41.3 L1360.3,36.5 V26.6 Z M1342.9,26.6 L1351.6,31.4 L1360.3,26.6 M1351.6,31.4 V41.3" fill="none" stroke="#30343a" stroke-width="2.4" stroke-linejoin="round"/><path d="M1391.3,20 V42.5 M1387.2,20 H1395.4 M1387.2,42.5 H1395.4" stroke="#30343a" stroke-width="2.4"/><path d="M1398,20 H1412.5 M1398,42.5 H1412.5" stroke="#30343a" stroke-width="2.3" stroke-dasharray="2.2,3.2"/><path d="M1397,31.5 H1409" stroke="#30343a" stroke-width="2.5"/><path d="M1406,26.6 L1412.2,31.5 L1406,36.4" fill="none" stroke="#30343a" stroke-width="2.5"/><path d="M1446.6,19 L1435.6,25 V38.5 L1446.6,44.6 L1457.6,38.5 V25 Z M1435.6,25 L1446.6,31 L1457.6,25 M1446.6,31 V44.6" fill="none" stroke="#30343a" stroke-width="2.5" stroke-linejoin="round"/><path d="M1442.8,23.6 L1449.3,21.9 L1443.6,27.4 L1450.3,25.7" fill="none" stroke="#30343a" stroke-width="1.1"/><text x="1440.8" y="39.6" font-family="Liberation Sans" font-size="7" text-anchor="middle" fill="#30343a">X</text><text x="1452.3" y="39.6" font-family="Liberation Sans" font-size="7" text-anchor="middle" fill="#30343a">Y</text><path d="M1494.5,18.5 L1482,44 H1507 Z" fill="none" stroke="#30343a" stroke-width="2.8" stroke-linejoin="miter"/><path d="M1494.5,19 V38 M1483,43.5 L1494.5,37.5 L1506,43.5" fill="none" stroke="#30343a" stroke-width="2.3"/><rect x="1533.6" y="19.4" width="16.3" height="24.5" rx="8.15" fill="none" stroke="#30343a" stroke-width="2.8"/><path d="M1533.6,28.7 H1549.9 M1541.75,19.4 V28.7" stroke="#30343a" stroke-width="2.3"/><rect x="1570" y="13.2" width="2" height="38.3" fill="#d3d3d3"/><path d="M1591.5,21.5 Q1588,22.5 1589,27 L1590.5,29 L1587.5,30.5 L1583.3,30 V34 L1586.5,36.5 L1590,36 L1593,37 L1595,43 L1603,42 L1603.5,39.5 L1598.5,38 V36 L1603.5,35 L1605,30 L1602,29 L1601,30.5 Q1598,29 1600,27 L1603.5,24 L1601.5,22 L1597.5,23.5 L1595,24.5 Z" fill="none" stroke="#9a9a9a" stroke-width="1.1"/></svg>
<div class="t" style="left:1855.40px;top:25.93px;font-family:'Liberation Sans';font-weight:bold;font-size:13.08px;color:#9a9a9a;transform:scaleX(1.1104);transform-origin:0 0;">MM</div>
<svg class="a" style="left:1063px;top:60px" width="824" height="837" viewBox="1063 60 824 837"><rect x="1169.5" y="186.0" width="613.0" height="607.0" fill="#cbd8ea"/><path d="M1169.5,186.0 V793.0 M1213.5,186.0 V793.0 M1257.5,186.0 V793.0 M1300.5,186.0 V793.0 M1344.5,186.0 V793.0 M1388.5,186.0 V793.0 M1432.5,186.0 V793.0 M1476.5,186.0 V793.0 M1519.5,186.0 V793.0 M1563.5,186.0 V793.0 M1607.5,186.0 V793.0 M1651.5,186.0 V793.0 M1694.5,186.0 V793.0 M1738.5,186.0 V793.0 M1782.5,186.0 V793.0 M1169.5,186.5 H1782.5 M1169.5,223.5 H1782.5 M1169.5,261.5 H1782.5 M1169.5,299.5 H1782.5 M1169.5,337.5 H1782.5 M1169.5,375.5 H1782.5 M1169.5,413.5 H1782.5 M1169.5,451.5 H1782.5 M1169.5,489.5 H1782.5 M1169.5,527.5 H1782.5 M1169.5,565.5 H1782.5 M1169.5,603.5 H1782.5 M1169.5,641.5 H1782.5 M1169.5,679.5 H1782.5 M1169.5,717.5 H1782.5 M1169.5,755.5 H1782.5 M1169.5,793.5 H1782.5 " stroke="#a6a6a6" stroke-width="1.1" fill="none"/><path d="M1213.5,186 V788" stroke="#00e000" stroke-width="1.1"/><path d="M1175,755.5 H1782.5" stroke="#f01010" stroke-width="1.1"/><path d="M1445.2,267.7 A32.3,32.3 0 0 1 1467.3,245.6 M1485.1,245.6 A32.3,32.3 0 0 1 1507.2,267.7 M1507.2,285.5 A32.3,32.3 0 0 1 1485.1,307.6 M1467.3,307.6 A32.3,32.3 0 0 1 1445.2,285.5 " stroke="#b4b4b4" stroke-width="5.5" fill="none"/><path d="M1441,268 A35,35 0 0 1 1467.5,242 M1485,242 A35,35 0 0 1 1511,268 M1511,286 A35,35 0 0 1 1485,311 M1467.5,311 A35,35 0 0 1 1441,286" stroke="#b4b4b4" stroke-width="1.2" fill="none"/><path d="M1467.2,228 H1484.8 V235 H1467.2 Z M1467.2,318.8 H1484.8 V325.6 H1467.2 Z M1423.2,265.3 H1441 V272.6 H1423.2 Z M1423.2,281.2 H1441 V287.8 H1423.2 Z M1511,265.3 H1529 V272.6 H1511 Z M1511,281.2 H1529 V287.8 H1511 Z" fill="#b4b4b4"/><path d="M1467.7,235 V246 M1484.3,235 V246 M1467.7,318.8 V308 M1484.3,318.8 V308 M1423.7,272.6 V281.2 M1528.5,272.6 V281.2" stroke="#b4b4b4" stroke-width="1.2"/><path d="M1505.4,246 V236.2 H1524 L1590,238 V252" stroke="#b4b4b4" stroke-width="1" fill="none"/><path d="M1364,290 L1363.7,243.8 L1387.3,222.4 L1550,221.6 L1590,242.3 L1590,258 M1359.2,246.7 L1409.5,221.6 M1397,261.5 V290 M1362,248 L1387,525 M1390,274 L1315,652 M1385,266 L1323,665 M1397,261.5 L1572.8,261.5 L1572.8,523 L1386,523 M1397,268.2 L1527.8,263 L1560,263 M1566,262 L1568,600 M1601.6,223 V240 L1639.4,674 M1268,659 L1323,653 M1261,668 L1313,662 M1268,659 L1261,735 M1261,668 L1268,733 M1261,714 L1310,720 M1268,720.4 L1600,720.4 M1260.5,714 V730 M1312.5,720 V733 M1329,720 V733 M1639.4,660.9 L1683.5,660.1 L1684.2,667.8 L1691.2,714.2 M1650.2,663.2 L1685.8,667 L1692,674 L1692.5,700 M1692,667 L1684,714 M1600,720.4 L1683.5,720.4 M1641.7,720.4 L1691.2,714.2 L1683.5,714.2 M1622.4,720.4 V732 M1639.4,720.4 V732 M1683.5,720.4 V732 M1692,714 V726 M1405,221 V245 M1547,222 V245" stroke="#d8d81a" stroke-width="1.2" fill="none"/><path d="M1215.4,458 V739 M1736,458 V739" stroke="#08089c" stroke-width="1.4" fill="none"/><path d="M1312,411 L1350,238 M1640.3,411 L1602.5,236" stroke="#08089c" stroke-width="2.2" fill="none"/><path d="M1215.4,458.7 L1297.3,430.9 L1297.3,424.3 L1218.9,450.2 Z" fill="#08089c"/><path d="M1736,458.7 L1654.4,430.9 L1654.4,424.3 L1732.5,450.2 Z" fill="#08089c"/><rect x="1235" y="754" width="483" height="7" fill="#08089c"/><path d="M1235,755.3 H1718" stroke="#d01818" stroke-width="1"/><path d="M1297.3,431 Q1308,424 1312,410.8 L1310,410.8 Q1305,420 1297.3,424.3 Z" fill="#a82828" stroke="#a82828" stroke-width="1.5"/><path d="M1654.4,431 Q1643.7,424 1639.7,410.8 L1641.7,410.8 Q1646.7,420 1654.4,424.3 Z" fill="#a82828" stroke="#a82828" stroke-width="1.5"/><path d="M1215.5,739 Q1218,756 1235.5,760 L1235.5,754 Q1222,750 1216.5,739 Z" fill="#a82828" stroke="#a82828" stroke-width="1.5"/><path d="M1736,739 Q1733.5,756 1718,760 L1718,754 Q1730,750 1735,739 Z" fill="#a82828" stroke="#a82828" stroke-width="1.5"/><path d="M1349.6,235 Q1476,187.3 1602.4,234.2 L1602.4,240.8 Q1476,198.4 1350.3,240 Z" fill="#a82828"/><rect x="1381.3" y="402" width="4.5" height="97" fill="none" stroke="#08089c" stroke-width="1.8"/><rect x="1381.3" y="536" width="4.5" height="97" fill="none" stroke="#08089c" stroke-width="1.8"/><rect x="1380.5" y="401" width="6" height="5" fill="#08089c"/><rect x="1380.5" y="493" width="6" height="7" fill="#08089c"/><rect x="1380.5" y="535" width="6" height="8" fill="#08089c"/><rect x="1380.5" y="626" width="6" height="7" fill="#08089c"/><rect x="1566.3" y="402" width="4.5" height="97" fill="none" stroke="#08089c" stroke-width="1.8"/><rect x="1566.3" y="536" width="4.5" height="97" fill="none" stroke="#08089c" stroke-width="1.8"/><rect x="1565.5" y="401" width="6" height="5" fill="#08089c"/><rect x="1565.5" y="493" width="6" height="7" fill="#08089c"/><rect x="1565.5" y="535" width="6" height="8" fill="#08089c"/><rect x="1565.5" y="626" width="6" height="7" fill="#08089c"/><ellipse cx="1259.5" cy="675.5" rx="9.0" ry="11.0" fill="#a82828" opacity="0.92"/><ellipse cx="1259.5" cy="674.7" rx="7.0" ry="3.8" fill="#e6e6ee"/><ellipse cx="1321.0" cy="675.5" rx="9.0" ry="11.0" fill="#a82828" opacity="0.92"/><ellipse cx="1321.0" cy="674.7" rx="7.0" ry="3.8" fill="#e6e6ee"/><ellipse cx="1259.5" cy="736.6" rx="9.0" ry="11.0" fill="#a82828" opacity="0.92"/><ellipse cx="1259.5" cy="735.8" rx="7.0" ry="3.8" fill="#e6e6ee"/><ellipse cx="1321.0" cy="736.6" rx="9.0" ry="11.0" fill="#a82828" opacity="0.92"/><ellipse cx="1321.0" cy="735.8" rx="7.0" ry="3.8" fill="#e6e6ee"/><ellipse cx="1631.0" cy="676.2" rx="9.0" ry="11.0" fill="#a82828" opacity="0.92"/><ellipse cx="1631.0" cy="675.4" rx="7.0" ry="3.8" fill="#e6e6ee"/><ellipse cx="1692.6" cy="676.2" rx="9.0" ry="11.0" fill="#a82828" opacity="0.92"/><ellipse cx="1692.6" cy="675.4" rx="7.0" ry="3.8" fill="#e6e6ee"/><ellipse cx="1631.0" cy="736.8" rx="9.0" ry="11.0" fill="#a82828" opacity="0.92"/><ellipse cx="1631.0" cy="736.0" rx="7.0" ry="3.8" fill="#e6e6ee"/><ellipse cx="1692.6" cy="736.8" rx="9.0" ry="11.0" fill="#a82828" opacity="0.92"/><ellipse cx="1692.6" cy="736.0" rx="7.0" ry="3.8" fill="#e6e6ee"/><ellipse cx="1388.5" cy="277.0" rx="9.3" ry="10.7" fill="#a82828" opacity="0.92"/><ellipse cx="1388.5" cy="276.2" rx="5.5" ry="4.5" fill="#e6e6ee"/><ellipse cx="1563.5" cy="277.0" rx="9.3" ry="10.7" fill="#a82828" opacity="0.92"/><ellipse cx="1563.5" cy="276.2" rx="5.5" ry="4.5" fill="#e6e6ee"/><ellipse cx="1405.0" cy="236.4" rx="5" ry="7" fill="#a82828"/><ellipse cx="1405.0" cy="237.9" rx="3" ry="1.6" fill="#e6e6ee"/><ellipse cx="1547.0" cy="236.4" rx="5" ry="7" fill="#a82828"/><ellipse cx="1547.0" cy="237.9" rx="3" ry="1.6" fill="#e6e6ee"/><ellipse cx="1359.2" cy="258.6" rx="5" ry="7" fill="#a82828"/><ellipse cx="1359.2" cy="260.1" rx="3" ry="1.6" fill="#e6e6ee"/><ellipse cx="1592.8" cy="260.0" rx="5" ry="7" fill="#a82828"/><ellipse cx="1592.8" cy="261.5" rx="3" ry="1.6" fill="#e6e6ee"/><path d="M1138,211 H1176 M1156.9,211 V754.3 M1138,754.3 H1176" stroke="#727272" stroke-width="2" fill="none"/><path d="M1212.7,788 V820 M1736.8,789 V819 M1212.7,803.8 H1736.8" stroke="#727272" stroke-width="2" fill="none"/><path d="M1775,743.7 H1812 M1775,763 H1812 M1793,743.7 V763" stroke="#727272" stroke-width="2" fill="none"/><defs><linearGradient id="cg" x1="0" x2="1"><stop offset="0" stop-color="#e8e820"/><stop offset="0.5" stop-color="#ffff40"/><stop offset="1" stop-color="#f0f020"/></linearGradient></defs><path d="M1532.7,162 L1551,223.4 L1570,162 Z" fill="url(#cg)"/><ellipse cx="1551.2" cy="154.9" rx="20.9" ry="18.2" fill="#c4c800"/><path d="M1551.2,141 L1546,160 L1556,160 Z" fill="#bcc000" opacity="0.6"/><path d="M1112.5,120 V162 M1181.5,120 V168" stroke="#ff0000" stroke-width="2"/><rect x="1113" y="99" width="68" height="87.5" rx="5" fill="#808080"/><rect x="1120" y="103" width="54.2" height="46" fill="#d3d3d3"/><rect x="1120" y="159" width="54.2" height="27.5" fill="#d3d3d3"/><path d="M1127,114.5 H1148.5 L1129,136 H1149.5" fill="none" stroke="#0000ff" stroke-width="3.4"/><path d="M1152,125.5 H1171 M1161.5,116.5 V134.5" stroke="#0000ff" stroke-width="3"/><path d="M1128.5,165.5 L1141.5,172.5 L1154.5,165.5 M1141.5,172.5 V180.5" fill="none" stroke="#008000" stroke-width="3.2"/><path d="M1155,174.5 H1166" stroke="#008000" stroke-width="2.8"/></svg>
<div class="t" style="left:1155.6px;top:533.2px;width:0;height:0"><div class="t" style="left:0;top:0;transform-origin:0 0;transform:rotate(-90deg)"><div class="t" style="left:-0.60px;top:-23.01px;font-family:'Liberation Sans';font-weight:normal;font-size:27.18px;color:#727272;transform:scaleX(0.7775);transform-origin:0 0;">143.48 mm</div></div></div>
<div class="t" style="left:1424.20px;top:800.00px;font-family:'Liberation Sans';font-weight:normal;font-size:23.98px;color:#727272;transform:scaleX(1.0062);transform-origin:0 0;">119.5 mm</div>
<div class="t" style="left:1794.40px;top:737.70px;font-family:'Liberation Sans';font-weight:normal;font-size:23.98px;color:#727272;transform:scaleX(1.0230);transform-origin:0 0;">8.5 mm</div>
<div class="t" style="left:1827.10px;top:880.93px;font-family:'Liberation Sans';font-weight:bold;font-size:13.08px;color:#f4f8ff;transform:scaleX(0.9152);transform-origin:0 0;">FPS: 3.96</div>
<!-- status -->
<div class="a" style="left:1024px;top:903px;width:51px;height:6px;background:#00c800;border-radius:5px"></div>

</body></html>
